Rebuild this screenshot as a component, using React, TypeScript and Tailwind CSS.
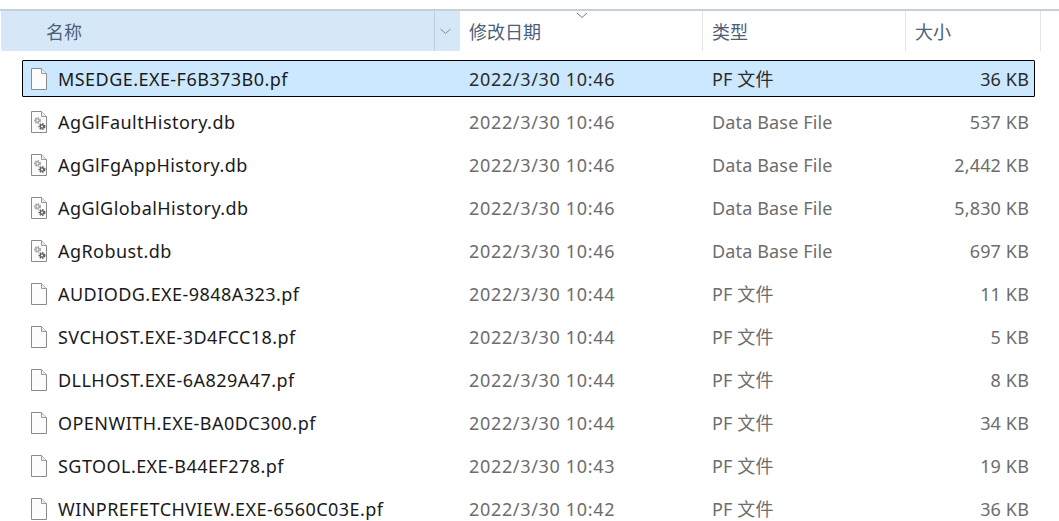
import React from 'react';

type Row = { name: string; date: string; type: string; size: string; db?: boolean; selected?: boolean };

const rows: Row[] = [
  { name: 'MSEDGE.EXE-F6B373B0.pf', date: '2022/3/30 10:46', type: 'PF 文件', size: '36 KB', selected: true },
  { name: 'AgGlFaultHistory.db', date: '2022/3/30 10:46', type: 'Data Base File', size: '537 KB', db: true },
  { name: 'AgGlFgAppHistory.db', date: '2022/3/30 10:46', type: 'Data Base File', size: '2,442 KB', db: true },
  { name: 'AgGlGlobalHistory.db', date: '2022/3/30 10:46', type: 'Data Base File', size: '5,830 KB', db: true },
  { name: 'AgRobust.db', date: '2022/3/30 10:46', type: 'Data Base File', size: '697 KB', db: true },
  { name: 'AUDIODG.EXE-9848A323.pf', date: '2022/3/30 10:44', type: 'PF 文件', size: '11 KB' },
  { name: 'SVCHOST.EXE-3D4FCC18.pf', date: '2022/3/30 10:44', type: 'PF 文件', size: '5 KB' },
  { name: 'DLLHOST.EXE-6A829A47.pf', date: '2022/3/30 10:44', type: 'PF 文件', size: '8 KB' },
  { name: 'OPENWITH.EXE-BA0DC300.pf', date: '2022/3/30 10:44', type: 'PF 文件', size: '34 KB' },
  { name: 'SGTOOL.EXE-B44EF278.pf', date: '2022/3/30 10:43', type: 'PF 文件', size: '19 KB' },
  { name: 'WINPREFETCHVIEW.EXE-6560C03E.pf', date: '2022/3/30 10:42', type: 'PF 文件', size: '36 KB' },
];

const Gear = ({ cx, cy, r, color }: { cx: number; cy: number; r: number; color: string }) => (
  <g>
    <circle cx={cx} cy={cy} r={r + 0.9} fill="none" stroke={color} strokeWidth="1.8" strokeDasharray="1.5 0.9" />
    <circle cx={cx} cy={cy} r={r} fill="none" stroke={color} strokeWidth="1.3" />
  </g>
);

const FileIcon = ({ db }: { db?: boolean }) => (
  <svg width="18" height="24" viewBox="0 0 18 24" className="shrink-0">
    <path d="M1.5 1.5H11.5L16.5 6.5V22.5H1.5Z" fill="#fcfcfc" stroke="#8a8a8a" strokeWidth="1" />
    <path d="M11.5 1.5V6.5H16.5" fill="#ececec" stroke="#9a9a9a" strokeWidth="1" />
    {db && (
      <g>
        <Gear cx={7.5} cy={10.5} r={1.7} color="#a3a6a9" />
        <Gear cx={12} cy={16.5} r={1.7} color="#5f6468" />
      </g>
    )}
  </svg>
);

export default function App() {
  return (
    <div className="h-[521px] w-[1059px] overflow-hidden bg-white font-['Noto_Sans','Noto_Sans_CJK_SC',sans-serif] text-[18px]">
      <div className="h-[9px]" />
      <div className="h-[2px] bg-[#c3d2d9]" />

      {/* column headers */}
      <div className="relative flex h-[40px] items-center text-[#4c607a]">
        <div className="ml-px flex h-full w-[459px] rounded-b-[2px] bg-[#d6e8f8]">
          <div className="w-[434px] border-r border-[#bdd0e0] pl-[45px] pt-px leading-[40px]">名称</div>
          <div className="flex flex-1 items-center justify-center pr-[4px]">
            <svg width="11" height="7" viewBox="0 0 11 7">
              <path d="M0.5 1L5.5 5.5L10.5 1" fill="none" stroke="#7f8b96" strokeWidth="1" />
            </svg>
          </div>
        </div>
        <div className="h-full w-[243px] border-r border-[#e3e6e9] pl-[9px] pt-px leading-[40px]">修改日期</div>
        <div className="h-full w-[203px] border-r border-[#e3e6e9] pl-[9px] pt-px leading-[40px]">类型</div>
        <div className="h-full w-[135px] border-r border-[#e3e6e9] pl-[9px] pt-px leading-[40px]">大小</div>
        <svg width="12" height="7" viewBox="0 0 12 7" className="absolute left-[576px] top-[1px]">
          <path d="M1 1L6 5.5L11 1" fill="none" stroke="#6f7a84" strokeWidth="1" />
        </svg>
      </div>

      {/* file rows */}
      <div className="mt-[9px] flex w-[1013px] flex-col ml-[22px]">
        {rows.map((r) => (
          <div
            key={r.name}
            className={`flex h-[37px] items-center rounded-[1px] mb-[6px] ${
              r.selected ? 'border border-black bg-[#cce8ff]' : 'border border-transparent'
            }`}
          >
            <div className="ml-[7px] w-[28px]">
              <FileIcon db={r.db} />
            </div>
            <div className="w-[411px] truncate pt-px tracking-[0.45px] text-[#1a1a1a]">{r.name}</div>
            <div className={`w-[243px] pt-px tracking-[0.67px] ${r.selected ? 'text-[#2b2b2b]' : 'text-[#6d6d6d]'}`}>{r.date}</div>
            <div className={`w-[200px] pt-px tracking-[0.15px] ${r.selected ? 'text-[#2b2b2b]' : 'text-[#6d6d6d]'}`}>{r.type}</div>
            <div className={`flex-1 pr-[5px] pt-px text-right tracking-[0.15px] ${r.selected ? 'text-[#2b2b2b]' : 'text-[#6d6d6d]'}`}>{r.size}</div>
          </div>
        ))}
      </div>
    </div>
  );
}
